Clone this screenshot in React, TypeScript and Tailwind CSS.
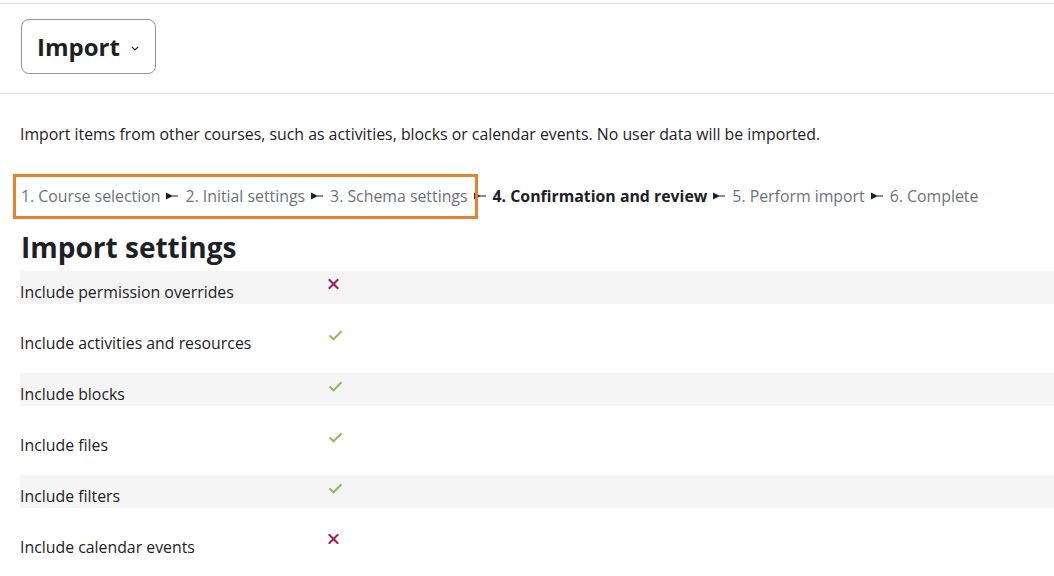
const font = { fontFamily: '"Open Sans", "Noto Sans", sans-serif' };

const steps = [
  { label: '1. Course selection', current: false },
  { label: '2. Initial settings', current: false },
  { label: '3. Schema settings', current: false },
  { label: '4. Confirmation and review', current: true },
  { label: '5. Perform import', current: false },
  { label: '6. Complete', current: false },
];

const settings = [
  { label: 'Include permission overrides', on: false },
  { label: 'Include activities and resources', on: true },
  { label: 'Include blocks', on: true },
  { label: 'Include files', on: true },
  { label: 'Include filters', on: true },
  { label: 'Include calendar events', on: false },
];

const Sep = () => (
  <svg width="12" height="8" viewBox="0 0 12 8" className="ml-[6px] mr-[7px] shrink-0">
    <path d="M0 0.5 L6 3.4 L12 3.4 L12 4.6 L6 4.6 L0 7.5 Z" fill="#1d2125" />
  </svg>
);

const Cross = () => (
  <svg width="11" height="10" viewBox="0 0 11 10">
    <path d="M1.5 1 L9.5 9 M9.5 1 L1.5 9" stroke="#a3174f" strokeWidth="2" strokeLinecap="square" />
  </svg>
);

const Check = () => (
  <svg width="15" height="11" viewBox="0 0 15 11">
    <path d="M1.5 5.5 L5.5 9.3 L13.5 1.3" stroke="#8bbd5a" strokeWidth="2" fill="none" />
  </svg>
);

export default function App() {
  return (
    <div className="relative min-h-[576px] bg-white text-[15.85px] text-[#1d2125]" style={font}>
      <div className="mt-[3px] border-t border-[#dee2e6]" />

      <div className="pl-[21px] pt-[15px] pb-[19px] border-b border-[#dee2e6]">
        <button className="flex items-center h-[55px] w-[135px] pl-[15px] border border-[#8f959e] rounded-[8px] bg-white">
          <span className="text-[24px] font-bold text-[#1d2125]">Import</span>
          <svg width="8" height="5" viewBox="0 0 8 5" className="ml-[11px] mt-[4px]">
            <path d="M0.8 0.8 L4 4 L7.2 0.8" stroke="#1d2125" strokeWidth="1.2" fill="none" />
          </svg>
        </button>
      </div>

      <div className="px-[20px]">
        <p className="mt-[29px] leading-[22px]">
          Import items from other courses, such as activities, blocks or calendar events. No user data will be imported.
        </p>

        <div className="relative mt-[40px] flex items-center leading-[22px] pl-[1px]">
          {steps.map((s, i) => (
            <div key={s.label} className="flex items-center">
              {i > 0 && <Sep />}
              <span className={s.current ? 'font-bold text-[#1d2125]' : 'text-[#6a737b]'}>{s.label}</span>
            </div>
          ))}
          <div className="absolute left-[-7px] top-[-11px] w-[465px] h-[45px] border-[3px] border-[#e8822f]" />
        </div>

        <h2 className="mt-[23px] text-[28px] font-bold leading-[34px] pl-[1px]">Import settings</h2>

        <div className="mt-[7px] -mr-[20px]">
          {settings.map((s, i) => (
            <div key={s.label} className={`flex h-[33px] mb-[18px] ${i % 2 === 0 ? 'bg-[#f5f5f5]' : ''}`}>
              <div className="w-[307px] pt-[10px] leading-[22px]">{s.label}</div>
              <div className="pt-[8px] pl-[1px]">{s.on ? <Check /> : <Cross />}</div>
            </div>
          ))}
        </div>
      </div>
    </div>
  );
}
